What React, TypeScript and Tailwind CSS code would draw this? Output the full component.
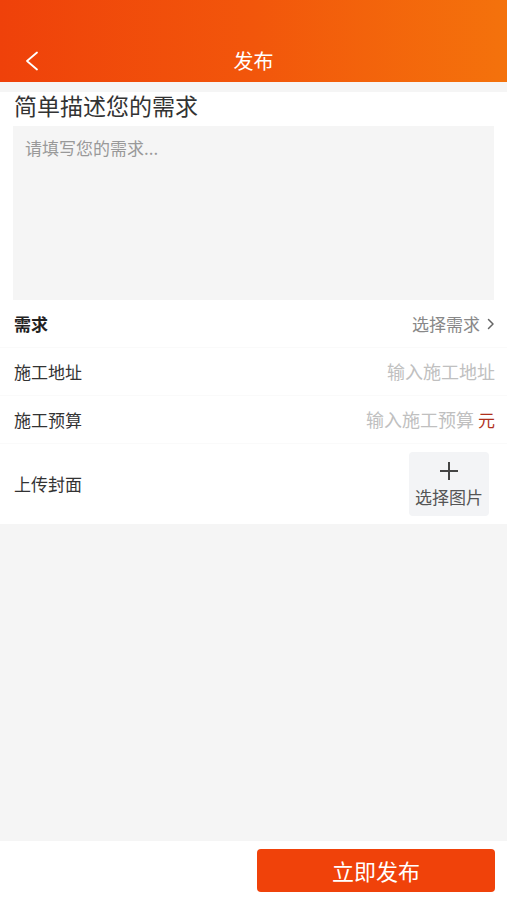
import React from 'react';

const font = { fontFamily: '"Noto Sans CJK SC", "Noto Sans", sans-serif' };

const Row: React.FC<{ label: string; bold?: boolean; children: React.ReactNode; last?: boolean }> = ({
  label,
  bold,
  children,
  last,
}) => (
  <div
    className={`flex items-center justify-between h-[48px] pl-[14px] pr-[12px] ${
      last ? '' : 'border-b border-[#fafafa]'
    }`}
  >
    <span className={`text-[17px] ${bold ? 'font-bold text-[#222]' : 'text-[#333]'}`}>{label}</span>
    {children}
  </div>
);

const App: React.FC = () => {
  return (
    <div className="min-h-screen flex flex-col bg-[#f5f5f5]" style={font}>
      {/* header */}
      <div className="h-[82px] bg-gradient-to-r from-[#ef410a] via-[#f2560b] to-[#f4720c] flex items-end">
        <div className="w-full h-[42px] flex items-center justify-center relative">
          <svg className="absolute left-[24px] top-[11px]" width="16" height="20" viewBox="0 0 16 20" fill="none">
            <path d="M13 1.5 L3 10 L13 18.5" stroke="white" strokeWidth="1.8" strokeLinecap="round" strokeLinejoin="round" />
          </svg>
          <span className="text-white text-[20px]">发布</span>
        </div>
      </div>

      <div className="h-[10px]" />

      {/* form */}
      <div className="bg-white">
        <div className="px-[14px] text-[23px] leading-[26px] text-[#333]">简单描述您的需求</div>
        <div className="mx-[13px] mt-[8px] h-[174px] bg-[#f5f5f5] px-[12px] pt-[10px]">
          <span className="text-[17px] leading-[22px] text-[#999]">请填写您的需求...</span>
        </div>

        <Row label="需求" bold>
          <span className="flex items-center gap-[7px] text-[17px] text-[#888]">
            选择需求
            <svg width="8" height="12" viewBox="0 0 8 12" fill="none">
              <path d="M1.5 1.5 L6 6 L1.5 10.5" stroke="#666" strokeWidth="1.5" strokeLinecap="round" strokeLinejoin="round" />
            </svg>
          </span>
        </Row>
        <Row label="施工地址">
          <span className="text-[18px] text-[#c0c0c0]">输入施工地址</span>
        </Row>
        <Row label="施工预算">
          <span className="flex items-center gap-[4px] text-[18px]">
            <span className="text-[#c0c0c0]">输入施工预算</span>
            <span className="text-[#b0301c] text-[17px]">元</span>
          </span>
        </Row>
        <div className="flex items-center justify-between h-[80px] pl-[14px] pr-[18px]">
          <span className="text-[17px] text-[#333]">上传封面</span>
          <div className="w-[80px] h-[64px] bg-[#f3f4f6] rounded-[4px] flex flex-col items-center justify-center">
            <svg width="22" height="22" viewBox="0 0 22 22" fill="none">
              <path d="M11 2 V20 M2 11 H20" stroke="#444" strokeWidth="2" />
            </svg>
            <span className="text-[17px] leading-[22px] text-[#555] mt-[4px]">选择图片</span>
          </div>
        </div>
      </div>

      <div className="flex-1" />

      {/* bottom bar */}
      <div className="h-[59px] bg-white flex items-center justify-end pr-[12px]">
        <button className="w-[238px] h-[43px] bg-[#f0420a] rounded-[4px] text-white text-[22px]">立即发布</button>
      </div>
    </div>
  );
};

export default App;
